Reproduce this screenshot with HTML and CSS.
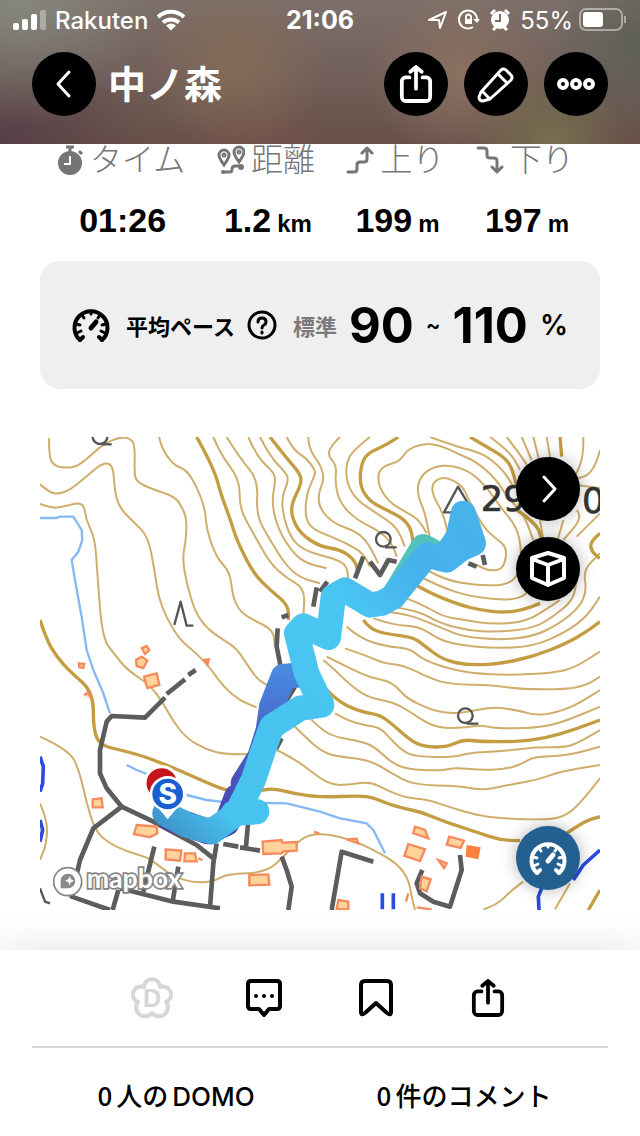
FILE: index.html
```html
<!DOCTYPE html>
<html lang="ja">
<head>
    <meta charset="UTF-8">
    <meta name="viewport" content="width=device-width, initial-scale=1.0">
    <title>中ノ森</title>
    <link rel="stylesheet" href="styles.css">
</head>
<body>

    <!-- Shared icons -->
    <svg class="icon-defs" width="0" height="0" aria-hidden="true">
        <symbol id="icon-share" viewBox="0 0 36 40">
            <g fill="none" stroke="currentColor" stroke-width="4" stroke-linecap="round" stroke-linejoin="round">
                <path d="M11 13H7a4 4 0 0 0-4 4v17a4 4 0 0 0 4 4h22a4 4 0 0 0 4-4V17a4 4 0 0 0-4-4h-4"/>
                <path d="M18 25V3M12 7l6-5 6 5"/>
            </g>
        </symbol>
        <symbol id="icon-gauge" viewBox="0 0 38 36">
            <g fill="none" stroke="currentColor" stroke-linecap="round">
                <path d="M8 33A16.500 16.500 0 1 1 30 33" stroke-width="4"/>
                <path d="M8 33l3-3M30 33l-3-3" stroke-width="4"/>
                <path d="M19 4v3M10 8l2 3M28 8l-2 3M4 17l4 1M34 17l-4 1M5 26l4-2M33 26l-4-2" stroke-width="3"/>
                <path d="M24 15l-5 6" stroke-width="5"/>
            </g>
        </symbol>
    </svg>

    <!-- Header -->
    <header class="header">
        <div class="status-bar">
            <div class="status-left">
                <svg width="34" height="20" viewBox="0 0 34 20" fill="#fff">
                    <rect x="0" y="13" width="6" height="7" rx="2"/>
                    <rect x="9" y="9" width="6" height="11" rx="2"/>
                    <rect x="18" y="4" width="6" height="16" rx="2"/>
                    <rect x="27" y="0" width="6" height="20" rx="2" opacity="0.35"/>
                </svg>
                <span class="carrier">Rakuten</span>
                <svg width="30" height="22" viewBox="0 0 30 22">
                    <g fill="none" stroke="#fff" stroke-width="4">
                        <path d="M2 8a19 19 0 0 1 26 0"/>
                        <path d="M7 13.500a12 12 0 0 1 16 0"/>
                    </g>
                    <path d="M15 21.500l-5-5q5-4 10 0z" fill="#fff"/>
                </svg>
            </div>
            <div class="clock">21:06</div>
            <div class="status-right">
                <svg width="20" height="20" viewBox="0 0 20 20" fill="none" stroke="#fff" stroke-width="2" stroke-linejoin="round">
                    <path d="M1 10L18 2l-6 16-1-8z"/>
                </svg>
                <svg width="22" height="22" viewBox="0 0 22 22" fill="none" stroke="#fff" stroke-width="2">
                    <path d="M15 18a9 9 0 1 1 4-8"/>
                    <path d="M15 10h7l-3 4z" fill="#fff" stroke="none"/>
                    <rect x="7" y="10" width="7" height="5" fill="#fff" stroke="none"/>
                    <path d="M8 10V8a2 2 0 0 1 5 0v2"/>
                </svg>
                <svg width="20" height="22" viewBox="0 0 20 22">
                    <circle cx="10" cy="11" r="9" fill="#fff"/>
                    <path d="M1 5l4-4M19 5l-4-4M3 21l3-3M17 21l-3-3" stroke="#fff" stroke-width="3"/>
                    <path d="M10 5v7H5" fill="none" stroke="#7d6b66" stroke-width="2"/>
                </svg>
                <span class="percent">55%</span>
                <svg width="48" height="24" viewBox="0 0 48 24">
                    <rect x="1" y="1" width="42" height="21" rx="6" fill="none" stroke="#fff" stroke-width="2" opacity="0.45"/>
                    <rect x="4" y="4" width="20" height="15" rx="3" fill="#fff"/>
                    <path d="M46 8v7" stroke="#fff" stroke-width="2" opacity="0.45"/>
                </svg>
            </div>
        </div>
        <div class="nav-bar">
            <button class="round-btn" aria-label="戻る">
                <svg width="18" height="30" viewBox="0 0 18 30" fill="none" stroke="#fff" stroke-width="3" stroke-linecap="round" stroke-linejoin="round">
                    <path d="M14 3L3 15l11 12"/>
                </svg>
            </button>
            <h1>中ノ森</h1>
            <button class="round-btn" aria-label="共有"><svg width="34" height="38"><use href="#icon-share"/></svg></button>
            <button class="round-btn" aria-label="編集">
                <svg width="38" height="38" viewBox="0 0 38 38" fill="none" stroke="#fff" stroke-width="3" stroke-linejoin="round">
                    <path d="M4 27L24 5q2-2 5 0l5 5q2 2 0 5L13 34l-7 2q-4 0-4-4z"/>
                    <path d="M21 9l9 9M5 26l8 8"/>
                </svg>
            </button>
            <button class="round-btn" aria-label="メニュー">
                <svg width="40" height="14" viewBox="0 0 40 14" fill="none" stroke="#fff" stroke-width="4">
                    <circle cx="7" cy="7" r="4"/><circle cx="20" cy="7" r="4"/><circle cx="33" cy="7" r="4"/>
                </svg>
            </button>
        </div>
    </header>

    <main>
        <!-- Activity stats -->
        <dl class="stats">
            <div class="stat">
                <dt>
                    <svg width="28" height="30" viewBox="0 0 28 30">
                        <circle cx="14" cy="18" r="12" fill="#757575"/>
                        <path d="M10 2h8M14 2v5M23 6l3 3" stroke="#757575" stroke-width="3"/>
                        <path d="M14 11v8H8" fill="none" stroke="#fff" stroke-width="2"/>
                    </svg>
                    タイム
                </dt>
                <dd>01:26</dd>
            </div>
            <div class="stat">
                <dt>
                    <svg width="28" height="30" viewBox="0 0 28 30" fill="none" stroke="#757575" stroke-width="3">
                        <path d="M7 20Q2 13 2 10a5 5 0 0 1 10 0q0 3-5 10zM22 17Q17 10 17 7a5 5 0 0 1 10 0q0 3-5 10z"/>
                        <path d="M6 27h7q2 0 2-3t3-3h6"/>
                        <circle cx="6" cy="27" r="2" fill="#757575" stroke="none"/>
                        <circle cx="24" cy="22" r="3" fill="#757575" stroke="none"/>
                        <circle cx="7" cy="10" r="1"/><circle cx="22" cy="7" r="1"/>
                    </svg>
                    距離
                </dt>
                <dd>1.2 <small>km</small></dd>
            </div>
            <div class="stat">
                <dt>
                    <svg width="28" height="28" viewBox="0 0 28 28" fill="none" stroke="#757575" stroke-width="3" stroke-linecap="round" stroke-linejoin="round">
                        <path d="M2 26h6q3 0 3-3v-4q0-3 3-3h4q3 0 3-3V3M16 7l5-5 5 5"/>
                    </svg>
                    上り
                </dt>
                <dd>199 <small>m</small></dd>
            </div>
            <div class="stat">
                <dt>
                    <svg width="28" height="28" viewBox="0 0 28 28" fill="none" stroke="#757575" stroke-width="3" stroke-linecap="round" stroke-linejoin="round">
                        <path d="M2 2h6q3 0 3 3v4q0 3 3 3h4q3 0 3 3v10M16 21l5 5 5-5"/>
                    </svg>
                    下り
                </dt>
                <dd>197 <small>m</small></dd>
            </div>
        </dl>

        <!-- Average pace -->
        <section class="pace">
            <svg width="38" height="36"><use href="#icon-gauge"/></svg>
            <span class="pace-label">平均ペース</span>
            <button class="help-btn" aria-label="平均ペースについて">
                <svg width="30" height="30" viewBox="0 0 30 30" fill="none" stroke="#000" stroke-width="3" stroke-linecap="round">
                    <circle cx="15" cy="15" r="13"/>
                    <path d="M11 12q0-4 4-4t4 4q0 2-2 3t-2 3"/>
                    <path d="M15 22v1"/>
                </svg>
            </button>
            <span class="pace-type">標準</span>
            <span class="pace-value">90</span>
            <span class="pace-unit">~</span>
            <span class="pace-value">110</span>
            <span class="pace-unit pace-percent">%</span>
        </section>

        <!-- Route map -->
        <section class="map">
            <svg class="map-canvas" viewBox="0 21 1680 1419" role="img" aria-label="地図">
                <defs>
                    <linearGradient id="track" gradientUnits="userSpaceOnUse" x1="350" y1="1160" x2="1290" y2="250">
                        <stop offset="0" stop-color="#3f97cf"/>
                        <stop offset="0.12" stop-color="#48c2ee"/>
                        <stop offset="0.65" stop-color="#4ac6f2"/>
                        <stop offset="0.82" stop-color="#46b2ec"/>
                        <stop offset="1" stop-color="#48b2ea"/>
                    </linearGradient>
                    <linearGradient id="return" gradientUnits="userSpaceOnUse" x1="0" y1="720" x2="0" y2="1200">
                        <stop offset="0" stop-color="#4a8be0"/>
                        <stop offset="0.4" stop-color="#4663c8"/>
                        <stop offset="1" stop-color="#4b3fb0"/>
                    </linearGradient>
                </defs>

                <!-- contour lines -->
                <g class="contour">
                    <path d="M27 25L27 80 40 105 65 113 105 112 140 88 180 50 215 30 245 22 270 25 285 45 283 130 290 155 330 175 405 200 425 230 440 265 438 330 427 385 440 460 465 545 500 595 550 630 590 655 632 720 655 750 690 770"/>
                    <path d="M0 163L30 188 55 192 90 180 150 130 180 105 205 98 220 115 225 190 240 235 280 275 325 320 345 430 355 500 380 565 420 630 470 670 515 720 550 770 600 812 650 832"/>
                    <path d="M0 222L35 235 70 230 130 214 138 270 165 325 172 430 187 625 225 675 262 720 330 765 370 820 400 875 440 925 500 960 560 973 650 972"/>
                    <path d="M357 21L365 55 400 105 440 120 470 170 495 235 500 300 530 385 570 425 578 500 600 545 640 570 700 600 705 650"/>
                    <path d="M520 21L540 70 600 150 598 235 640 310 690 400 740 445 795 475 790 560"/>
                    <path d="M560 21L600 85 655 150 648 255 690 330 740 410 785 445 840 460"/>
                    <path d="M625 21L650 80 705 130 705 160 695 220 715 300 760 370 800 400 860 415"/>
                    <path d="M660 21L690 80 740 130 745 155 725 200 730 260 755 330 800 365 880 385 920 405 925 450"/>
                    <path d="M740 21L760 60 800 85 825 120 825 135 800 190 795 260 815 295 860 315 920 340 970 370 990 410"/>
                    <path d="M805 21L805 55 845 110 852 150 835 190 838 235 880 280 950 305 985 340 1015 400"/>
                    <path d="M900 21L870 50 865 80 890 105 885 160 900 220 950 270 1030 310 1060 350 1070 380"/>
                    <path d="M990 21L940 60 918 100 920 160 950 210 1010 250 1070 290 1095 350"/>
                    <path d="M1160 310L1140 270 1095 245 1045 215 1012 160 1020 110 1080 95 1100 60 1150 40 1200 45 1250 70 1310 95 1370 150 1400 200 1450 250 1480 330"/>
                    <path d="M1170 330L1160 260 1130 190 1140 140 1180 110 1235 105 1290 125 1340 170 1380 230 1430 290 1445 360 1440 430 1400 467 1300 465 1220 450 1160 420"/>
                    <path d="M1225 320L1215 260 1180 200 1175 165 1195 145 1225 143 1270 170 1290 220 1330 290 1360 320 1395 345 1400 380 1385 420 1345 422 1310 405"/>
                    <path d="M1170 21L1250 50 1330 70 1390 120 1420 170M1350 21L1410 65 1440 120M1400 21L1445 80 1470 120M1445 21L1475 90M1480 21L1500 100M1520 21L1535 110M1630 21L1632 80 1600 150M1680 60L1662 130 1600 150M1610 165L1680 175M1610 240L1630 260 1570 330M1680 250L1610 320M1500 270L1510 330M1570 270L1550 340"/>
                    <path d="M1130 435L1200 470 1280 497 1380 510 1440 505 1470 480"/>
                    <path d="M1085 500L1140 520 1210 560 1270 570 1360 583 1460 575 1530 530 1560 510"/>
                    <path d="M1055 530L1130 540 1200 580 1280 600 1370 607 1480 595 1540 560 1600 510 1610 450"/>
                    <path d="M1040 545L1100 552 1160 575 1220 600 1270 620 1380 630 1480 620 1560 580 1620 530 1640 480 1630 420 1680 370"/>
                    <path d="M1000 565L1060 585 1140 590 1200 630 1260 645 1360 655 1480 650 1580 605 1640 560 1680 500"/>
                    <path d="M920 590L960 625 1040 650 1110 655 1150 690 1240 720 1320 732 1440 735 1540 728 1600 715 1680 665"/>
                    <path d="M915 655L975 675 1030 700 1090 705 1170 745 1230 763 1360 765 1440 778 1580 778 1640 765 1680 740"/>
                    <path d="M860 680L940 720 990 742 1040 752 1070 770 1100 805 1170 838 1220 850 1270 848 1360 830 1440 842 1480 855 1530 852 1600 830 1680 780"/>
                    <path d="M850 690L885 720 920 755 980 802 1060 817 1110 845 1170 885 1220 895 1280 892 1320 885 1370 895 1480 895 1560 880 1680 830"/>
                    <path d="M885 850L920 870 970 885 1020 892 1050 925 1090 965 1130 980 1240 982 1290 968 1360 965 1440 958 1490 952 1580 952 1620 935 1680 900"/>
                    <path d="M805 860L840 895 880 920 970 935 1010 955 1050 995 1100 1018 1200 1022 1245 1013 1320 1020 1390 1018 1440 1005 1480 980 1580 978 1680 950"/>
                    <path d="M760 885L800 925 840 960 880 978 990 990 1055 1030 1120 1065 1260 1068 1310 1078 1350 1077 1420 1062 1490 1050 1560 1025 1680 1005"/>
                    <path d="M710 960L770 990 840 1045 880 1065 920 1065 990 1055 1040 1080 1100 1105 1160 1108 1240 1135 1310 1155 1380 1165 1530 1170 1580 1155 1620 1120 1680 1045"/>
                    <path d="M0 920L90 960 120 1030 140 1120 165 1200 200 1235 260 1265 320 1280 360 1310 400 1340 460 1358 520 1355 560 1332 680 1328 740 1270 790 1220 840 1210 900 1220 960 1240 1020 1270 1070 1300 1105 1345 1115 1400 1125 1440"/>
                    <path d="M0 1120L22 1170 20 1240 0 1290M1330 1438L1370 1425 1410 1385 1450 1355M1545 1438L1590 1360"/>
                </g>
                <g class="contour contour-index">
                    <path d="M0 570L20 630 50 680 90 725 160 785 160 900 180 945 240 960 300 975 380 1005 460 1040 540 1075 580 1085 660 1082 700 1075 760 1090 840 1102 960 1097 1000 1103 1040 1120 1090 1135 1140 1145 1200 1170 1260 1190 1320 1210 1380 1230 1440 1232M1580 1210L1630 1175 1680 1160M1645 1440L1680 1380"/>
                    <path d="M470 21L520 110 545 200 570 265 590 330 640 430 690 480 745 525 745 570"/>
                    <path d="M690 21L740 85 780 130 785 160 755 220 755 260 780 310 840 350 900 358 945 390 955 430"/>
                    <path d="M1075 21L1040 45 980 70 962 110 960 170 990 215 1040 240 1090 265 1115 300 1120 350"/>
                    <path d="M1290 21L1340 50 1390 80 1415 110 1430 170M1430 240L1490 280 1505 330M1560 21L1565 80M1680 310L1650 335 1655 365 1680 385"/>
                    <path d="M1100 450L1170 490 1260 525 1320 540 1390 548 1450 540 1500 520"/>
                    <path d="M970 570L990 597 1040 612 1120 622 1150 645 1210 690 1280 705 1370 703 1480 680 1580 640 1640 605 1680 575"/>
                    <path d="M820 740L840 760 880 800 920 828 970 847 1020 855 1060 885 1110 930 1150 950 1220 952 1270 928 1320 935 1440 935 1520 923 1600 900 1680 870"/>
                </g>

                <!-- water -->
                <g class="stream">
                    <path d="M0 264H50L60 260H100L125 300 127 330 115 365 95 390 105 450 125 560 140 660 160 720 190 790 210 850"/>
                    <path d="M260 1005L290 1020 340 1040M440 1095L500 1110 560 1117 740 1120 840 1145 900 1165 980 1180 1000 1200 1035 1270"/>
                </g>
                <g class="river">
                    <path d="M0 980L10 1010 8 1060 0 1085M0 1170L8 1200 0 1235M1680 1260L1630 1305 1600 1350M1507 1370L1495 1400 1497 1440M1027 1390V1438M1060 1390V1438"/>
                </g>

                <!-- roads and paths -->
                <g class="road">
                    <path d="M375 803L315 863 215 858 200 875 180 960V1030L200 1075 245 1130 160 1195 120 1290 95 1400 210 1440"/>
                    <path d="M245 1130L340 1175 470 1245 520 1285M530 1240L520 1300 510 1432M240 1375L400 1415 540 1435M235 1380L218 1440M343 1250L310 1385M415 1310L398 1415M625 1170L618 1250M725 1280L740 1320 755 1370 745 1440"/>
                    <path d="M380 792L435 748M445 735L467 720M550 1242L595 1250M600 1252L660 1262"/>
                    <path d="M1000 1295L905 1265 875 1440M1147 1320L1130 1360 1140 1390 1180 1415 1230 1430 1265 1320 1260 1275"/>
                    <path d="M830 472L820 530M725 562L745 555M713 595L710 650 722 710M765 770L720 845M725 925L708 957M840 485L862 455M970 380L945 445M990 395L1020 435 1045 390 1070 395M1285 400L1310 410M1328 375L1335 405"/>
                </g>

                <!-- tree marks and summit -->
                <g class="mark">
                    <path d="M403 585L422 515 440 587H460"/>
                    <circle cx="180" cy="20" r="22"/><path d="M185 43H215"/>
                    <circle cx="1030" cy="328" r="22"/><path d="M1035 352H1070"/>
                    <circle cx="1276" cy="857" r="22"/><path d="M1280 881H1315"/>
                    <path d="M0 1375L15 1415 30 1420"/>
                    <path d="M1212 247L1254 170 1300 247z"/>
                </g>
                <text class="elevation" x="1322" y="244">29</text>
                <text class="elevation" x="1626" y="248">0</text>

                <!-- buildings -->
                <g class="building">
                    <path d="M312 740L350 730 358 765 322 774zM290 1185L350 1190 352 1210 330 1222 282 1212zM377 1258L424 1262 420 1292 377 1288zM435 1270H465L470 1294H433zM668 1235L725 1230 727 1238 770 1236V1262L730 1264 725 1270 670 1272zM628 1335L685 1333 688 1364 628 1366z"/>
                    <path d="M288 690L305 680 322 692 310 714 290 708zM305 655L320 648 328 660 315 672zM158 1108L185 1105 188 1132H158zM117 700L133 702 130 714 118 712zM492 690L506 688 503 702z"/>
                    <path d="M132 795L145 788 155 808M475 1285L488 1290M822 1206L838 1210"/>
                    <path d="M1125 1190L1155 1200 1165 1225 1120 1210zM1105 1242L1155 1258 1140 1293 1093 1277zM1228 1220L1272 1232 1262 1254 1220 1244zM1145 1340L1172 1348 1160 1384 1140 1375zM895 1410L925 1415V1438H890zM920 1228L950 1226 955 1240zM1195 1290L1220 1300 1212 1314zM1105 1390L1098 1415M1130 1432L1175 1438"/>
                </g>
                <path class="building-solid" d="M1280 1245L1322 1252 1315 1288 1277 1280z"/>

                <!-- recorded track -->
                <g class="track">
                    <path d="M1060 500L1150 350 1215 385" stroke="#54c2ba"/>
                    <path d="M775 735L730 740 695 830 685 900 660 980 610 1060" stroke="url(#return)"/>
                    <path d="M590 1100L560 1180 505 1205 390 1165" stroke="url(#return)"/>
                    <path d="M375 1150L440 1185 515 1205 590 1150 640 1050 670 960 695 890 780 835 845 825 800 730 770 610 790 588 865 622 880 500 915 480 990 525 1025 520 1060 500 1160 375 1220 390 1265 355 1300 340 1270 250 1255 320 1215 380M580 1150L650 1145" stroke="url(#track)"/>
                </g>

                <!-- start and goal pins -->
                <circle cx="365" cy="1060" r="50" fill="#c8141e" stroke="#fff" stroke-width="9"/>
                <path d="M383 1168L358 1138Q330 1125 329 1092a54 54 0 0 1 108 0Q436 1125 408 1138z" fill="#fff"/>
                <circle cx="383" cy="1092" r="46" fill="#1a5fd0"/>
                <text class="pin-label" x="383" y="1122">S</text>

                <!-- mapbox logo -->
                <g class="mapbox">
                    <circle cx="83" cy="1355" r="42"/>
                    <path d="M62 1375V1352a22 22 0 1 1 22 23z" fill="#8a8a8a" stroke="none"/>
                    <path d="M89 1338l4 10 10 4-10 4-4 10-4-10-10-4 10-4z" stroke="none"/>
                    <text x="140" y="1374">mapbox</text>
                </g>
            </svg>
            <div class="map-tools">
                <button class="round-btn" aria-label="拡大">
                    <svg width="18" height="30" viewBox="0 0 18 30" fill="none" stroke="#fff" stroke-width="3" stroke-linecap="round" stroke-linejoin="round">
                        <path d="M5 3l11 12L5 27"/>
                    </svg>
                </button>
                <button class="round-btn" aria-label="3D">
                    <svg width="36" height="36" viewBox="0 0 36 36" fill="none" stroke="#fff" stroke-width="4" stroke-linejoin="round">
                        <path d="M18 2l16 5v20l-16 7-16-7V7zM2 8l16 6 16-6M18 14v20"/>
                    </svg>
                </button>
                <button class="round-btn speed-btn" aria-label="ペース"><svg width="38" height="36"><use href="#icon-gauge"/></svg></button>
            </div>
        </section>
    </main>

    <!-- Bottom bar -->
    <footer class="footer">
        <div class="actions">
            <button aria-label="DOMO">
                <svg width="42" height="42" viewBox="0 0 42 42">
                    <path d="M13 10a8 8 0 0 1 16 0a8 8 0 0 1 6 15a8 8 0 0 1-14 11a8 8 0 0 1-14-11a8 8 0 0 1 6-15z" fill="none" stroke="#d6d6d6" stroke-width="4" stroke-linejoin="round"/>
                    <text x="21" y="30" class="domo-mark">D</text>
                </svg>
            </button>
            <button aria-label="コメント">
                <svg width="36" height="38" viewBox="0 0 36 38" fill="none" stroke="#000" stroke-width="4" stroke-linejoin="round">
                    <path d="M5 2h26q3 0 3 3v22q0 3-3 3h-8l-5 6-5-6H5q-3 0-3-3V5q0-3 3-3z"/>
                    <path d="M10 17h0M18 17h0M26 17h0" stroke-linecap="round"/>
                </svg>
            </button>
            <button aria-label="ブックマーク">
                <svg width="34" height="38" viewBox="0 0 34 38" fill="none" stroke="#000" stroke-width="4" stroke-linejoin="round">
                    <path d="M6 2h22q4 0 4 4v27q0 4-4 1L17 24 6 34q-4 3-4-1V6q0-4 4-4z"/>
                </svg>
            </button>
            <button aria-label="共有"><svg width="34" height="38"><use href="#icon-share"/></svg></button>
        </div>
        <div class="counts">
            <a href="#"><span>0</span>人の<span class="domo-name">DOMO</span></a>
            <a href="#"><span>0</span>件のコメント</a>
        </div>
    </footer>

    <script>
        // Round the corners of the contour lines
        function smoothLine(line) {
            const n = line.match(/\d+/g).map(Number);
            let d = 'M' + n[0] + ' ' + n[1];
            for (let i = 2; i < n.length - 2; i += 2) {
                const midX = (n[i] + n[i + 2]) / 2;
                const midY = (n[i + 1] + n[i + 3]) / 2;
                d += 'Q' + n[i] + ' ' + n[i + 1] + ' ' + midX + ' ' + midY;
            }
            return d + 'L' + n[n.length - 2] + ' ' + n[n.length - 1];
        }

        document.querySelectorAll('.contour path').forEach(path => {
            const lines = path.getAttribute('d').split('M').filter(Boolean);
            path.setAttribute('d', lines.map(smoothLine).join(''));
        });
    </script>
</body>
</html>
```

FILE: styles.css
```css
body {
    font-family: Inter, "Noto Sans CJK JP", sans-serif;
    background-color: #fff;
    color: #000;
    margin: 0;
    min-height: 100vh;
    display: flex;
    flex-direction: column;
}

button {
    padding: 0;
    border: none;
    background: none;
    color: inherit;
    cursor: pointer;
}

svg {
    display: block;
    flex-shrink: 0;
}

.icon-defs {
    position: absolute;
}

/* Header */
.header {
    position: sticky;
    top: 0;
    z-index: 2;
    height: 144px;
    color: #fff;
    background:
        radial-gradient(circle at 3% 0%, #85877c 0, transparent 20%),
        radial-gradient(circle at 37% 45%, #846c57 0, transparent 22%),
        radial-gradient(circle at 86% 100%, #77704f 0, transparent 14%),
        radial-gradient(circle at 100% 30%, #5d6056 0, transparent 14%),
        radial-gradient(circle at 72% 50%, #8a7060 0, transparent 20%),
        radial-gradient(circle at 40% 110%, #76504b 0, transparent 20%),
        radial-gradient(circle at 0% 100%, #573f47 0, transparent 22%),
        linear-gradient(#7d706b, #675049);
}

.status-bar {
    display: grid;
    grid-template-columns: 1fr auto 1fr;
    align-items: center;
    height: 40px;
    padding: 0 13px;
    font-size: 24px;
}

.status-left,
.status-right {
    display: flex;
    align-items: center;
    gap: 8px;
}

.status-right {
    justify-content: flex-end;
    gap: 10px;
}

.carrier {
    font-weight: 500;
}

.clock {
    font-size: 25px;
    font-weight: 700;
}

.status-right svg:last-child {
    margin-left: -4px;
}

.nav-bar {
    display: flex;
    align-items: center;
    gap: 16px;
    padding: 12px 32px 0;
}

h1 {
    flex: 1;
    margin: 0 0 0 -4px;
    font-size: 38px;
    line-height: 64px;
    font-weight: 700;
}

.round-btn {
    display: flex;
    justify-content: center;
    align-items: center;
    width: 64px;
    height: 64px;
    border-radius: 50%;
    background-color: #000;
    color: #fff;
}

/* Stats, scrolled partly under the header */
.stats {
    display: flex;
    justify-content: space-between;
    margin: -8px 66px 0 56px;
}

.stat {
    text-align: center;
}

dt {
    display: flex;
    align-items: center;
    gap: 6px;
    font-size: 32px;
    line-height: 48px;
    font-weight: 300;
    color: #757575;
}

dd {
    display: flex;
    justify-content: center;
    align-items: baseline;
    gap: 6px;
    margin: 14px 0 0;
    padding-left: 4px;
    font-family: "Liberation Sans", sans-serif;
    font-size: 34px;
    line-height: 44px;
    font-weight: 700;
}

dd small {
    font-size: 24px;
}

/* Average pace */
.pace {
    display: flex;
    align-items: center;
    justify-content: center;
    gap: 12px;
    height: 128px;
    margin: 15px 40px 48px;
    border-radius: 20px;
    background-color: #efefef;
    white-space: nowrap;
}

.pace-label,
.pace-type {
    font-size: 22px;
    font-weight: 700;
}

.pace-label {
    margin-left: 4px;
}

.pace-type {
    margin-left: 4px;
    color: #7a7a7a;
}

.pace-value {
    font-size: 49px;
    font-weight: 700;
}

.pace-unit {
    font-size: 22px;
    font-weight: 600;
}

.pace-percent {
    font-size: 28px;
}

/* Map */
.map {
    position: relative;
    margin: 0 40px 40px;
}

.map-canvas {
    width: 100%;
    height: auto;
    overflow: hidden;
}

.contour,
.stream,
.river,
.road,
.mark,
.track {
    fill: none;
    stroke-linejoin: round;
}

.contour {
    stroke: #cfae6c;
    stroke-width: 6;
}

.contour-index {
    stroke: #c49c42;
    stroke-width: 10;
}

.stream {
    stroke: #85b9f4;
    stroke-width: 7;
}

.river {
    stroke: #2c4be0;
    stroke-width: 11;
}

.road {
    stroke: #5c5c5c;
    stroke-width: 14;
}

.mark {
    stroke: #555;
    stroke-width: 7;
}

.elevation {
    font-family: "DejaVu Sans", sans-serif;
    font-size: 106px;
    fill: #333;
    stroke: #333;
    stroke-width: 2;
}

.building {
    fill: #ffd39a;
    stroke: #f58a5c;
    stroke-width: 7;
}

.building-solid {
    fill: #ff8040;
}

.track {
    stroke-width: 76;
    stroke-linecap: round;
}

.pin-label {
    font-size: 84px;
    font-weight: 800;
    fill: #fff;
    text-anchor: middle;
}

.mapbox {
    fill: #fff;
    stroke: #858585;
    stroke-width: 5;
}

.mapbox text {
    font-family: Lato, sans-serif;
    font-size: 80px;
    font-weight: 700;
    paint-order: stroke;
    stroke-width: 10;
}

.map-tools {
    position: absolute;
    top: 20px;
    right: 20px;
    bottom: 20px;
    display: flex;
    flex-direction: column;
    gap: 16px;
}

.map-tools .round-btn {
    box-shadow: 0 0 16px rgba(0, 0, 0, 0.3);
}

.map-tools .speed-btn {
    margin-top: auto;
    background-color: #235f8f;
}

/* Bottom bar */
.footer {
    position: sticky;
    bottom: 0;
    flex: 1;
    padding: 0 32px;
    background-color: #fff;
    box-shadow: 0 0 40px rgba(0, 0, 0, 0.12);
}

.actions {
    display: flex;
    justify-content: center;
    height: 96px;
    border-bottom: 2px solid #d8d8d8;
}

.actions button {
    display: flex;
    justify-content: center;
    align-items: center;
    width: 112px;
}

.domo-mark {
    font-size: 25px;
    font-weight: 800;
    fill: #d6d6d6;
    text-anchor: middle;
}

.counts {
    display: flex;
    padding: 27px 0;
}

.counts a {
    flex: 1;
    display: flex;
    justify-content: center;
    align-items: baseline;
    gap: 4px;
    color: #000;
    font-family: "Noto Sans CJK JP", sans-serif;
    font-size: 26px;
    line-height: 40px;
    font-weight: 500;
    text-decoration: none;
}

.domo-name {
    font-family: Inter, sans-serif;
}
```
